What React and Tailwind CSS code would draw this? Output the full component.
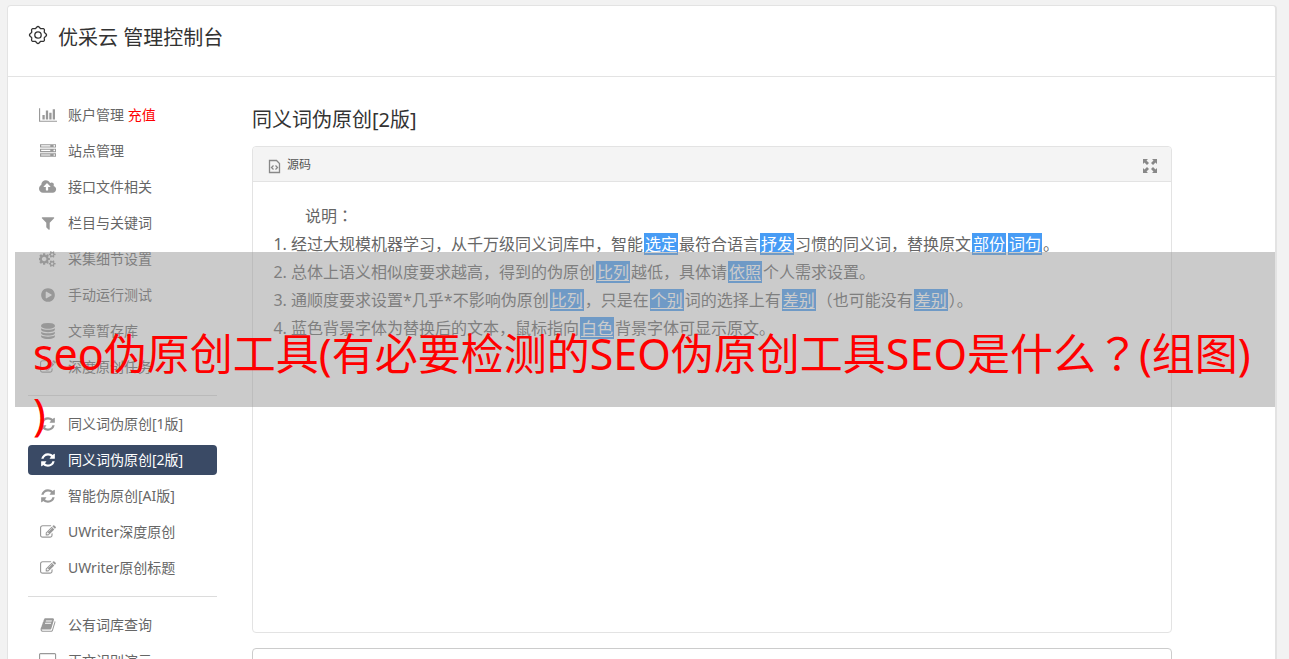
'use client';

const icons = {
  chart: {
    width: 2048,
    d: 'M640 896v512h-256v-512h256zm384-512v1024h-256v-1024h256zm1024 1152v128h-2048v-1536h128v1408h1920zm-640-896v768h-256v-768h256zm384-384v1152h-256v-1152h256z',
  },
  server: {
    width: 1792,
    d: 'M128 1408h1024v-128h-1024v128zm0-512h1024v-128h-1024v128zm1568 448q0-40-28-68t-68-28-68 28-28 68 28 68 68 28 68-28 28-68zm-1568-960h1024v-128h-1024v128zm1568 448q0-40-28-68t-68-28-68 28-28 68 28 68 68 28 68-28 28-68zm0-512q0-40-28-68t-68-28-68 28-28 68 28 68 68 28 68-28 28-68zm96 832v384h-1792v-384h1792zm0-512v384h-1792v-384h1792zm0-512v384h-1792v-384h1792z',
  },
  cloud: {
    width: 1920,
    d: 'M1280 864q0-14-9-23l-352-352q-9-9-23-9t-23 9l-351 351q-10 12-10 24 0 14 9 23t23 9h224v352q0 13 9.5 22.5t22.5 9.5h192q13 0 22.5-9.5t9.5-22.5v-352h224q13 0 22.5-9.5t9.5-22.5zm640 288q0 159-112.5 271.5t-271.5 112.5h-1088q-185 0-316.5-131.5t-131.5-316.5q0-130 70-240t188-165q-2-30-2-43 0-212 150-362t362-150q156 0 285.5 87t188.5 231q71-62 166-62 106 0 181 75t75 181q0 76-41 138 130 31 213.5 135.5t83.5 238.5z',
  },
  filter: {
    width: 1792,
    d: 'M1595 295q17 41-14 70l-493 493v742q0 42-39 59-13 5-25 5-27 0-45-19l-256-256q-19-19-19-45v-486l-493-493q-31-29-14-70 17-39 59-39h1280q42 0 59 39z',
  },
  cogs: {
    width: 1920,
    d: 'M832 896q0-106-75-181t-181-75-181 75-75 181 75 181 181 75 181-75 75-181zm768 512q0-52-38-90t-90-38-90 38-38 90q0 53 37.5 90.5t90.5 37.5 90.5-37.5 37.5-90.5zm0-1024q0-52-38-90t-90-38-90 38-38 90q0 53 37.5 90.5t90.5 37.5 90.5-37.5 37.5-90.5zm-384 421v185q0 10-7 19.5t-16 10.5l-155 24q-11 35-32 76 34 48 90 115 7 11 7 20 0 12-7 19-23 30-82.5 89.5t-78.5 59.5q-11 0-21-7l-115-90q-37 19-77 31-11 108-23 155-7 24-30 24h-186q-11 0-20-7.5t-10-17.5l-23-153q-34-10-75-31l-118 89q-7 7-20 7-11 0-21-8-144-133-144-160 0-9 7-19 10-14 41-53t47-61q-23-44-35-82l-152-24q-10-1-17-9.5t-7-19.5v-185q0-10 7-19.5t16-10.5l155-24q11-35 32-76-34-48-90-115-7-11-7-20 0-12 7-20 22-30 82-89t79-59q11 0 21 7l115 90q34-18 77-32 11-108 23-154 7-24 30-24h186q11 0 20 7.5t10 17.5l23 153q34 10 75 31l118-89q8-7 20-7 11 0 21 8 144 133 144 160 0 8-7 19-12 16-42 54t-45 60q23 48 34 82l152 23q10 2 17 10.5t7 19.5zm640 533v140q0 16-149 31-12 27-30 52 51 113 51 138 0 4-4 7-122 71-124 71-8 0-46-47t-52-68q-20 2-30 2t-30-2q-14 21-52 68t-46 47q-2 0-124-71-4-3-4-7 0-25 51-138-18-25-30-52-149-15-149-31v-140q0-16 149-31 13-29 30-52-51-113-51-138 0-4 4-7 4-2 35-20t59-34 30-16q8 0 46 46.5t52 67.5q20-2 30-2t30 2q51-71 92-112l6-2q4 0 124 70 4 3 4 7 0 25-51 138 17 23 30 52 149 15 149 31zm0-1024v140q0 16-149 31-12 27-30 52 51 113 51 138 0 4-4 7-122 71-124 71-8 0-46-47t-52-68q-20 2-30 2t-30-2q-14 21-52 68t-46 47q-2 0-124-71-4-3-4-7 0-25 51-138-18-25-30-52-149-15-149-31v-140q0-16 149-31 13-29 30-52-51-113-51-138 0-4 4-7 4-2 35-20t59-34 30-16q8 0 46 46.5t52 67.5q20-2 30-2t30 2q51-71 92-112l6-2q4 0 124 70 4 3 4 7 0 25-51 138 17 23 30 52 149 15 149 31z',
  },
  play: {
    width: 1792,
    d: 'M896 128q209 0 385.5 103t279.5 279.5 103 385.5-103 385.5-279.5 279.5-385.5 103-385.5-103-279.5-279.5-103-385.5 103-385.5 279.5-279.5 385.5-103zm384 823q32-18 32-55t-32-55l-544-320q-31-19-64-1-32 19-32 56v640q0 37 32 56 16 8 32 8 17 0 32-9z',
  },
  database: {
    width: 1792,
    d: 'M896 768q237 0 443-43t325-127v170q0 69-103 128t-280 93.5-385 34.5-385-34.5-280-93.5-103-128v-170q119 84 325 127t443 43zm0 768q237 0 443-43t325-127v170q0 69-103 128t-280 93.5-385 34.5-385-34.5-280-93.5-103-128v-170q119 84 325 127t443 43zm0-384q237 0 443-43t325-127v170q0 69-103 128t-280 93.5-385 34.5-385-34.5-280-93.5-103-128v-170q119 84 325 127t443 43zm0-1152q208 0 385 34.5t280 93.5 103 128v128q0 69-103 128t-280 93.5-385 34.5-385-34.5-280-93.5-103-128v-128q0-69 103-128t280-93.5 385-34.5z',
  },
  edit: {
    width: 1792,
    d: 'M888 1184l116-116-152-152-116 116v56h96v96h56zm440-720q-16-16-33 1l-350 350q-17 17-1 33t33-1l350-350q17-17 1-33zm80 594v190q0 119-84.5 203.5t-203.5 84.5h-832q-119 0-203.5-84.5t-84.5-203.5v-832q0-119 84.5-203.5t203.5-84.5h832q63 0 117 25 15 7 18 23 3 17-9 29l-49 49q-14 14-32 8-23-6-45-6h-832q-66 0-113 47t-47 113v832q0 66 47 113t113 47h832q66 0 113-47t47-113v-126q0-13 9-22l64-64q15-15 35-7t20 29zm-96-738l288 288-672 672h-288v-288zm444 132l-92 92-288-288 92-92q28-28 68-28t68 28l152 152q28 28 28 68t-28 68z',
  },
  refresh: {
    width: 1792,
    d: 'M1639 1056q0 5-1 7-64 268-268 434.5t-478 166.5q-146 0-282.5-55t-243.5-157l-129 129q-19 19-45 19t-45-19-19-45v-448q0-26 19-45t45-19h448q26 0 45 19t19 45-19 45l-137 137q71 66 161 102t187 36q134 0 250-65t186-179q11-17 53-117 8-23 30-23h192q13 0 22.5 9.5t9.5 22.5zm25-800v448q0 26-19 45t-45 19h-448q-26 0-45-19t-19-45 19-45l138-138q-148-137-349-137-134 0-250 65t-186 179q-11 17-53 117-8 23-30 23h-199q-13 0-22.5-9.5t-9.5-22.5v-7q65-268 270-434.5t480-166.5q146 0 284 55.5t245 156.5l130-129q19-19 45-19t45 19 19 45z',
  },
  book: {
    width: 1792,
    d: 'M1703 478q40 57 18 129l-275 906q-19 64-76.5 107.5t-122.5 43.5h-923q-77 0-148.5-53.5t-99.5-131.5q-24-67-2-127 0-4 3-27t4-37q1-8-3-21.5t-3-19.5q2-11 8-21t16.5-23.5 16.5-23.5q23-38 45-91.5t30-91.5q3-10 .5-30t-.5-28q3-11 17-28t17-23q21-36 42-92t25-90q1-9-2.5-32t.5-28q4-13 22-30.5t22-22.5q19-26 42.5-84.5t27.5-96.5q1-8-3-25.5t-2-26.5q2-8 9-18t18-23 17-21q8-12 16.5-30.5t15-35 16-36 19.5-32 26.5-23.5 36-11.5 47.5 5.5l-1 3q38-9 51-9h761q74 0 114 56t18 130l-274 906q-36 119-71.5 153.5t-128.5 34.5h-869q-27 0-38 15-11 16-1 43 24 70 144 70h923q29 0 56-15.5t35-41.5l300-987q7-22 5-57 38 15 59 43zm-1064 2q-4 13 2 22.5t20 9.5h608q13 0 25.5-9.5t16.5-22.5l21-64q4-13-2-22.5t-20-9.5h-608q-13 0-25.5 9.5t-16.5 22.5zm-83 256q-4 13 2 22.5t20 9.5h608q13 0 25.5-9.5t16.5-22.5l21-64q4-13-2-22.5t-20-9.5h-608q-13 0-25.5 9.5t-16.5 22.5z',
  },
  desktop: {
    width: 1920,
    d: 'M1792 992v-832q0-13-9.5-22.5t-22.5-9.5h-1600q-13 0-22.5 9.5t-9.5 22.5v832q0 13 9.5 22.5t22.5 9.5h1600q13 0 22.5-9.5t9.5-22.5zm128-832v1088q0 66-47 113t-113 47h-544q0 37 16 77.5t32 71 16 43.5q0 26-19 45t-45 19h-512q-26 0-45-19t-19-45q0-14 16-44t32-70 16-78h-544q-66 0-113-47t-47-113v-1088q0-66 47-113t113-47h1600q66 0 113 47t47 113z',
  },
};

const menuGroups = [
  [
    { icon: 'chart', label: '账户管理', extra: '充值' },
    { icon: 'server', label: '站点管理' },
    { icon: 'cloud', label: '接口文件相关' },
    { icon: 'filter', label: '栏目与关键词' },
    { icon: 'cogs', label: '采集细节设置' },
    { icon: 'play', label: '手动运行测试' },
    { icon: 'database', label: '文章暂存库' },
    { icon: 'edit', label: '深度原创任务' },
  ],
  [
    { icon: 'refresh', label: '同义词伪原创[1版]' },
    { icon: 'refresh', label: '同义词伪原创[2版]', active: true },
    { icon: 'refresh', label: '智能伪原创[AI版]' },
    { icon: 'edit', label: 'UWriter深度原创' },
    { icon: 'edit', label: 'UWriter原创标题' },
  ],
  [
    { icon: 'book', label: '公有词库查询' },
    { icon: 'desktop', label: '正文识别演示' },
  ],
];

function MenuIcon({ name }) {
  const icon = icons[name];
  return (
    <svg className="h-4 w-auto" viewBox={`0 0 ${icon.width} 1792`} fill="currentColor" aria-hidden="true">
      <path d={icon.d} />
    </svg>
  );
}

// Outline of a gear with eight rounded teeth
const gearPoints = Array.from({ length: 96 }, (_, i) => {
  const angle = (i / 96) * Math.PI * 2;
  const radius = 7.7 + 0.8 * Math.cos(angle * 8);
  return `${(10 + radius * Math.cos(angle)).toFixed(2)},${(10 + radius * Math.sin(angle)).toFixed(2)}`;
}).join(' ');

function GearIcon() {
  return (
    <svg className="h-5 w-5" viewBox="0 0 20 20" fill="none" stroke="currentColor" strokeWidth="1.3" strokeLinejoin="round" aria-hidden="true">
      <polygon points={gearPoints} />
      <circle cx="10" cy="10" r="3.2" />
    </svg>
  );
}

function Sidebar() {
  return (
    <nav className="w-[189px] shrink-0 pt-[23px]">
      {menuGroups.map((group, index) => (
        <ul key={index} className={index > 0 ? 'mt-[13px] border-t border-[#dcdcdc] pt-[13px]' : ''}>
          {group.map((item) => (
            <li key={item.label} className="mb-1.5">
              <a
                href="#"
                className={
                  item.active
                    ? 'flex h-[30px] items-center rounded bg-[#3a4a65] text-white'
                    : 'flex h-[30px] items-center rounded text-[#666]'
                }
              >
                <span className={item.active ? 'flex w-10 justify-center' : 'flex w-10 justify-center text-[#999]'}>
                  <MenuIcon name={item.icon} />
                </span>
                <span>
                  {item.label}
                  {item.extra && <span className="text-[#f00]"> {item.extra}</span>}
                </span>
              </a>
            </li>
          ))}
        </ul>
      ))}
    </nav>
  );
}

function Swap({ children }) {
  return <u className="mx-px bg-[#479cf5] px-px text-white underline-offset-2">{children}</u>;
}

// Full-width punctuation centred in its cell
function Mark({ children }) {
  return <span lang="zh-TW" className="font-['Noto_Sans_CJK_TC',sans-serif] leading-none">{children}</span>;
}

function Editor() {
  return (
    <div className="h-[487px] rounded border border-[#e3e3e3]">
      <div className="flex h-[35px] items-center justify-between rounded-t border-b border-[#e3e3e3] bg-[#f4f4f4] pl-[15px] pr-3.5 text-[#888]">
        <button type="button" className="flex items-center gap-1.5 pt-0.5 text-xs text-[#555]">
          <svg className="mt-0.5 h-[15px] w-[13px] text-[#888]" viewBox="0 0 13 15" fill="none" stroke="currentColor" strokeWidth="1.3" aria-hidden="true">
            <path d="M1.5 1.5h7l3 3v9h-10z" />
            <path d="M5.5 6.5l-2 2 2 2M7.5 6.5l2 2-2 2" />
          </svg>
          源码
        </button>
        <button type="button" aria-label="全屏" className="mt-1">
          <svg className="h-3.5 w-3.5" viewBox="0 0 14 14" fill="currentColor" aria-hidden="true">
            <path d="M0 0h5L3.5 1.5 6 4 4 6 1.5 3.5 0 5zM14 0v5l-1.5-1.5L10 6 8 4l2.5-2.5L9 0zM0 14V9l1.5 1.5L4 8l2 2-2.5 2.5L5 14zM14 14H9l1.5-1.5L8 10l2-2 2.5 2.5L14 9z" />
          </svg>
        </button>
      </div>
      <div className="pl-[38px] pt-5 text-base leading-7 text-[#666]">
        <p className="pl-3.5">
          说明<Mark>：</Mark>
        </p>
        <ol className="list-decimal">
          <li>
            经过大规模机器学习，从千万级同义词库中，智能<Swap>选定</Swap>最符合语言<Swap>抒发</Swap>习惯的同义词，替换原文<Swap>部份</Swap><Swap>词句</Swap>。
          </li>
          <li>
            总体上语义相似度要求越高，得到的伪原创<Swap>比列</Swap>越低，具体请<Swap>依照</Swap>个人需求设置。
          </li>
          <li>
            通顺度要求设置*几乎*不影响伪原创<Swap>比列</Swap>，只是在<Swap>个别</Swap>词的选择上有<Swap>差别</Swap><Mark>（</Mark>也可能没有<Swap>差别</Swap><Mark>）</Mark>。
          </li>
          <li>
            蓝色背景字体为替换后的文本，鼠标指向<Swap>白色</Swap>背景字体可显示原文。
          </li>
        </ol>
      </div>
    </div>
  );
}

export default function App() {
  return (
    <div className="relative h-screen overflow-hidden bg-[#f2f2f2] pl-[7px] pr-3 pt-[5px] font-['Noto_Sans','Noto_Sans_CJK_SC',sans-serif] text-sm text-[#333]" lang="zh-CN">
      <div className="min-h-screen rounded border border-r-2 border-[#e3e3e3] bg-white">
        <header className="flex h-[71px] items-start gap-2.5 border-b border-[#e3e3e3] pl-5 pt-[17px]">
          <span className="pt-0.5">
            <GearIcon />
          </span>
          <h1 className="text-xl leading-[30px]">优采云 管理控制台</h1>
        </header>
        <div className="flex gap-[35px] pl-5">
          <Sidebar />
          <main className="max-w-[920px] flex-1 pt-7">
            <h2 className="mb-[11px] text-xl leading-[30px]">同义词伪原创[2版]</h2>
            <Editor />
            <textarea aria-label="原文" className="mt-[15px] block h-40 w-full rounded border border-[#ccc] bg-white p-2"></textarea>
          </main>
        </div>
      </div>

      <div className="absolute left-[15px] right-3.5 top-[252px] h-[155px] bg-[#979797]/50 pl-[18px] pt-[72px] text-[43px] leading-[60px] text-[#f00]">
        seo伪原创工具(有必要检测的SEO伪原创工具SEO是什么<Mark>？</Mark>(组图)<br />)
      </div>
    </div>
  );
}
